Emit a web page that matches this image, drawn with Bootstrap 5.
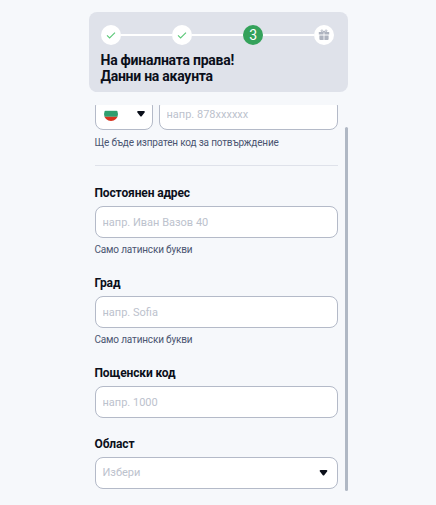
<!DOCTYPE html>
<html lang="bg">
<head>
<meta charset="utf-8">
<link href="https://cdn.jsdelivr.net/npm/bootstrap@5.3.0/dist/css/bootstrap.min.css" rel="stylesheet">
<style>
html,body{height:100%;overflow:hidden}
body{background:#f6f8fb;font-family:Roboto,"Liberation Sans",sans-serif;color:#0b0f1a}
.shell{width:259px;margin:0 auto;padding-top:12px}
.hero{height:80px;background:#dfe2ea;border-radius:8px;padding:13px 13px 0 12px}
.track{height:20px}
.track-line{flex:1 1 0;height:2px;background:#fff}
.dot{width:20px;height:20px;border-radius:50%;background:#fff;flex:none}
.dot-now{background:#34a25b;color:#fff;font-size:14px;font-weight:400;line-height:20px;text-align:center}
.hero-title{font-size:14px;font-weight:700;line-height:16px;margin:7px 0 0;color:#0b0f1a;letter-spacing:-.25px}
.viewport{height:386px;margin-top:13px;overflow:hidden}
.pane{width:243px;margin-left:6px;margin-top:-7px}
.thumb{width:3px;height:364px;margin:35px 0 0 7px;background:#b0b8c4;border-radius:2px;flex:none}
.field{height:32px;border:1px solid #b4bac8;border-radius:8px;font-size:11px;color:#0b0f1a;background-color:#fff;padding:0 7px;box-shadow:none}
.field::placeholder{color:#bcc2cd;opacity:1}
.phone-row{column-gap:6px}
.code-box{width:58px;flex:none;padding:0 7px 0 8px}
.caret{flex:none}
.hint{font-size:10px;line-height:14px;color:#4a5571;margin-top:5px;letter-spacing:-.17px}
.hint-first{margin-top:6px}
.divider{margin:15px 0 19px;border-top:1px solid #dfe2ea;opacity:1}
.lbl{font-size:12px;font-weight:700;line-height:14px;padding-top:1px;margin-bottom:6px;color:#0b0f1a;display:block;letter-spacing:-.13px}
.group{margin-bottom:18px}
.group-tight{margin-bottom:18px}
.select-box{color:#bcc2cd;padding-right:9px}
</style>
</head>
<body>
<div class="shell">
  <div class="hero">
    <div class="track d-flex align-items-center">
      <div class="dot d-flex align-items-center justify-content-center"><svg width="10" height="10" viewBox="0 0 10 10"><path d="M1 5.400 3.600 8 9 2.600" fill="none" stroke="#5cc878" stroke-width="1.100"/></svg></div>
      <div class="track-line"></div>
      <div class="dot d-flex align-items-center justify-content-center"><svg width="10" height="10" viewBox="0 0 10 10"><path d="M1 5.400 3.600 8 9 2.600" fill="none" stroke="#5cc878" stroke-width="1.100"/></svg></div>
      <div class="track-line"></div>
      <div class="dot dot-now">3</div>
      <div class="track-line"></div>
      <div class="dot d-flex align-items-center justify-content-center"><svg width="12" height="12" viewBox="0 0 12 12" fill="#aeb3bf"><path d="M.8 3h4.800v2.600H.8zM6.400 3h4.800v2.600H6.400zM1.400 6.400h4.200V11h-3.200a1 1 0 0 1-1-1zM6.400 6.400h4.200V10a1 1 0 0 1-1 1H6.400z"/><path d="M6 3C5 .8 3 .6 3 1.800 3 2.800 4.500 3 6 3c1.500 0 3-.2 3-1.200C9 .6 7 .8 6 3z" fill="none" stroke="#aeb3bf" stroke-width="1"/></svg></div>
    </div>
    <h1 class="hero-title">На финалната права!<br>Данни на акаунта</h1>
  </div>
  <div class="d-flex">
    <div class="viewport">
      <form class="pane">
        <div class="d-flex phone-row mb-0">
          <div class="field code-box form-control d-flex align-items-center justify-content-between">
            <svg width="14" height="14" viewBox="0 0 14 14"><clipPath id="fc"><circle cx="7" cy="7" r="7"/></clipPath><g clip-path="url(#fc)"><rect width="14" height="3.800" fill="#fff"/><rect y="3.800" width="14" height="6" fill="#2f9e6e"/><rect y="9.800" width="14" height="4.200" fill="#d8321e"/></g></svg>
            <svg class="caret" width="8" height="6" viewBox="0 0 9 7"><path d="M1 0h7a1 1 0 0 1 .7 1.700L5.300 6a1.200 1.200 0 0 1-1.600 0L.3 1.700A1 1 0 0 1 1 0z" fill="#0b0f1a"/></svg>
          </div>
          <input class="form-control field" placeholder="напр. 878xxxxxx">
        </div>
        <div class="hint hint-first">Ще бъде изпратен код за потвърждение</div>
        <hr class="divider">
        <div class="group">
          <label class="lbl">Постоянен адрес</label>
          <input class="form-control field" placeholder="напр. Иван Вазов 40">
          <div class="hint">Само латински букви</div>
        </div>
        <div class="group">
          <label class="lbl">Град</label>
          <input class="form-control field" placeholder="напр. Sofia">
          <div class="hint">Само латински букви</div>
        </div>
        <div class="group-tight">
          <label class="lbl">Пощенски код</label>
          <input class="form-control field" placeholder="напр. 1000">
        </div>
        <div>
          <label class="lbl">Област</label>
          <div class="form-control field select-box d-flex align-items-center justify-content-between">
            <span>Избери</span>
            <svg class="caret" width="9" height="6" viewBox="0 0 9 7"><path d="M1 0h7a1 1 0 0 1 .7 1.700L5.300 6a1.200 1.200 0 0 1-1.600 0L.3 1.700A1 1 0 0 1 1 0z" fill="#0b0f1a"/></svg>
          </div>
        </div>
      </form>
    </div>
    <div class="thumb"></div>
  </div>
</div>
</body>
</html>
